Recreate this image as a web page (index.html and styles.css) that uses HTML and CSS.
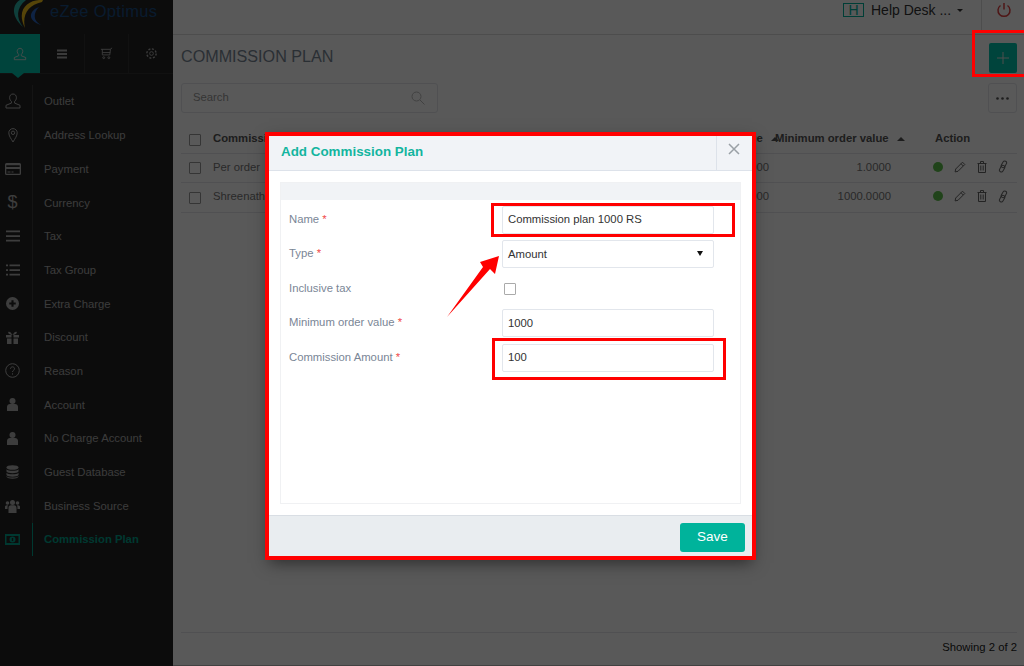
FILE: index.html
```html
<!DOCTYPE html>
<html lang="en">
<head>
    <meta charset="UTF-8">
    <title>Commission Plan</title>
    <link rel="stylesheet" href="styles.css">
</head>
<body>
    <div class="app">
        <aside class="sidebar">
            <div class="logo">
                <svg class="logo-mark" width="44" height="30" viewBox="0 0 44 30">
                    <path d="M12 0C5 4 2 15 15 27C8 18 8 8 18 0Z" fill="#2bb5a8"/>
                    <path d="M35 0C22-1 7 8 17 28C14 15 20 5 34 2Z" fill="#f2c21a"/>
                    <path d="M31 7C22 10 18 20 33 25C25 21 25 13 31 7Z" fill="#2a66c4"/>
                </svg>
                <span class="logo-text">eZee Optimus</span>
            </div>
            <div class="tabs">
                <div class="tab tab-active">
                    <svg width="14" height="14" viewBox="0 0 16 16" fill="none" stroke="currentColor"><path d="M8 1.500c-2 0-3.200 1.500-3.200 3.500 0 1.500.8 2.800 1.700 3.500v1.500L1.500 12v2.500h13V12l-5-1.900V8.500c.9-.7 1.700-2 1.700-3.500 0-2-1.200-3.500-3.200-3.500z"/></svg>
                </div>
                <div class="tab">
                    <svg width="12" height="12" viewBox="0 0 12 12" fill="currentColor"><path d="M1 1.500h10v2H1zM1 5h10v2H1zM1 8.500h10v2H1z"/></svg>
                </div>
                <div class="tab">
                    <svg width="13" height="13" viewBox="0 0 14 14" fill="none" stroke="currentColor"><path d="M1 2.500h10l2-1.500M2.500 2.500v6h8l.8-6M2.500 6h8.500"/><circle cx="4" cy="11.500" r="1"/><circle cx="9.500" cy="11.500" r="1"/></svg>
                </div>
                <div class="tab">
                    <svg width="13" height="13" viewBox="0 0 14 14" fill="none" stroke="currentColor"><circle cx="7" cy="7" r="2"/><circle cx="7" cy="7" r="5" stroke-width="1.500" stroke-dasharray="2.200 1.700"/></svg>
                </div>
            </div>
            <ul class="menu">
                <li class="menu-item"><span class="menu-icon"><svg width="16" height="16" viewBox="0 0 16 16" fill="none" stroke="currentColor"><path d="M8 1c-2.200 0-3.400 1.600-3.400 3.700 0 1.600.8 3 1.800 3.700v1.700L1 12.300V15h14v-2.700l-5.400-2.200V8.400c1-.7 1.800-2.100 1.800-3.700C11.400 2.600 10.200 1 8 1z"/></svg></span>Outlet</li>
                <li class="menu-item"><span class="menu-icon"><svg width="16" height="16" viewBox="0 0 16 16" fill="none" stroke="currentColor"><path d="M8 15C6 11.500 3.800 9 3.800 5.800a4.200 4.200 0 0 1 8.400 0C12.200 9 10 11.500 8 15z"/><circle cx="8" cy="5.800" r="1.700"/></svg></span>Address Lookup</li>
                <li class="menu-item"><span class="menu-icon"><svg width="16" height="14" viewBox="0 0 16 14" fill="currentColor"><path d="M1.500 1h13A1.500 1.500 0 0 1 16 2.500v9a1.500 1.500 0 0 1-1.500 1.500h-13A1.500 1.500 0 0 1 0 11.500v-9A1.500 1.500 0 0 1 1.500 1zM1.300 3.200v1.800h13.400V3.200zM1.300 7v4.700h13.400V7zM2.500 9.500h3v1h-3zM6.500 9.500h2v1h-2z" fill-rule="evenodd"/></svg></span>Payment</li>
                <li class="menu-item"><span class="menu-icon menu-glyph">$</span>Currency</li>
                <li class="menu-item"><span class="menu-icon"><svg width="14" height="12" viewBox="0 0 14 12" fill="currentColor"><path d="M0 .5h14v1.700H0zM0 5.200h14v1.700H0zM0 9.800h14v1.700H0z"/></svg></span>Tax</li>
                <li class="menu-item"><span class="menu-icon"><svg width="14" height="12" viewBox="0 0 14 12" fill="currentColor"><path d="M0 .5h2v1.700H0zM3.500 .5H14v1.700H3.500zM0 5.200h2v1.700H0zM3.500 5.200H14v1.700H3.500zM0 9.800h2v1.700H0zM3.500 9.800H14v1.700H3.500z"/></svg></span>Tax Group</li>
                <li class="menu-item"><span class="menu-icon"><svg width="13" height="13" viewBox="0 0 12 12"><path d="M6 0a6 6 0 1 0 0 12A6 6 0 0 0 6 0zM5 3h2v2h2v2H7v2H5V7H3V5h2z" fill="currentColor" fill-rule="evenodd"/></svg></span>Extra Charge</li>
                <li class="menu-item"><span class="menu-icon"><svg width="13" height="13" viewBox="0 0 13 13" fill="currentColor"><path d="M0 4h5.500v2.500H0zM7.500 4H13v2.500H7.500zM1 7.500h4.500V13H1zM7.500 7.500H12V13H7.500zM6.500 4C5 1 3 0 2.300 1S3 3.700 6.500 4c3.500-.3 4.900-2 4.200-3S8 1 6.500 4z"/></svg></span>Discount</li>
                <li class="menu-item"><span class="menu-icon"><svg width="15" height="15" viewBox="0 0 15 15" fill="none" stroke="currentColor"><circle cx="7.500" cy="7.500" r="6.800"/><path d="M5.500 5.800c0-2.600 4-2.600 4 0 0 1.600-2 1.500-2 3.200M7.500 10.300v1.300"/></svg></span>Reason</li>
                <li class="menu-item"><span class="menu-icon"><svg width="11" height="13" viewBox="0 0 11 13" fill="currentColor"><circle cx="5.500" cy="3" r="3"/><path d="M0 13V9c0-2 1.500-3 3-3h5c1.500 0 3 1 3 3v4z"/></svg></span>Account</li>
                <li class="menu-item"><span class="menu-icon"><svg width="11" height="13" viewBox="0 0 11 13" fill="currentColor"><circle cx="5.500" cy="3" r="3"/><path d="M0 13V9c0-2 1.500-3 3-3h5c1.500 0 3 1 3 3v4z"/></svg></span>No Charge Account</li>
                <li class="menu-item"><span class="menu-icon"><svg width="13" height="14" viewBox="0 0 13 14" fill="currentColor"><ellipse cx="6.500" cy="2.500" rx="6" ry="2.300"/><path d="M.5 4.200c1 2 11 2 12 0v2.300c-1 2.200-11 2.200-12 0zM.5 7.700c1 2 11 2 12 0V10c-1 2.200-11 2.200-12 0zM.5 11c1 2 11 2 12 0v.8c-1 2.600-11 2.600-12 0z"/></svg></span>Guest Database</li>
                <li class="menu-item"><span class="menu-icon"><svg width="15" height="14" viewBox="0 0 15 14" fill="currentColor"><circle cx="7.500" cy="3.500" r="2.500"/><circle cx="2.500" cy="4" r="1.800"/><circle cx="12.500" cy="4" r="1.800"/><path d="M3.500 14V9c0-2 1-2.800 2.500-2.800h3c1.500 0 2.500.8 2.500 2.800v5zM0 10V8c0-1 .7-1.800 2-1.800h1C2.500 7 2.500 8 2.500 10zM15 10V8c0-1-.7-1.800-2-1.800h-1c.5.8.5 1.800.5 3.800z"/></svg></span>Business Source</li>
                <li class="menu-item menu-active"><span class="menu-icon"><svg width="15" height="11" viewBox="0 0 15 11"><path d="M0 0h15v11H0zM1.500 2v7h12V2zM7.500 2.500a3 3 0 1 1 0 6 3 3 0 0 1 0-6zM6.800 4v3h1.400V4z" fill="currentColor" fill-rule="evenodd"/></svg></span>Commission Plan</li>
            </ul>
        </aside>

        <div class="main">
            <header class="topbar">
                <span class="desk-badge">H</span>
                <span class="desk-name">Help Desk ...</span>
                <span class="caret-down"></span>
                <span class="power">
                    <svg width="16" height="16" viewBox="0 0 16 16" fill="none" stroke="currentColor" stroke-width="1.500"><path d="M8 1v6.500M4.500 3.500a6 6 0 1 0 7 0"/></svg>
                </span>
            </header>

            <section class="content">
                <div class="title-row">
                    <h1>COMMISSION PLAN</h1>
                    <button class="add-btn">
                        <svg width="14" height="14" viewBox="0 0 14 14" stroke="currentColor"><path d="M7 1v12M1 7h12"/></svg>
                    </button>
                </div>
                <div class="search-row">
                    <div class="search">
                        <span class="search-text">Search</span>
                        <svg width="14" height="14" viewBox="0 0 14 14" fill="none" stroke="currentColor"><circle cx="5.500" cy="5.500" r="4.500"/><path d="M9 9l4.500 4.500"/></svg>
                    </div>
                    <button class="more-btn">
                        <svg width="13" height="3" viewBox="0 0 13 3" fill="currentColor"><circle cx="1.500" cy="1.500" r="1.300"/><circle cx="6.500" cy="1.500" r="1.300"/><circle cx="11.500" cy="1.500" r="1.300"/></svg>
                    </button>
                </div>
                <table class="grid">
                    <thead>
                        <tr>
                            <th class="col-check"><span class="check"></span></th>
                            <th class="col-name">Commission Plan</th>
                            <th class="col-value">Value <span class="caret-up"></span></th>
                            <th class="col-min">Minimum order value <span class="caret-up"></span></th>
                            <th class="col-action">Action</th>
                        </tr>
                    </thead>
                    <tbody>
                        <tr>
                            <td><span class="check"></span></td>
                            <td>Per order</td>
                            <td class="num-value">1.0000</td>
                            <td class="num-min">1.0000</td>
                            <td>
                                <div class="actions">
                                    <span class="dot"></span>
                                    <svg width="12" height="12" viewBox="0 0 12 12" fill="none" stroke="currentColor"><path d="M8.500 1.200l2.300 2.300-6.800 6.800-2.900.6.600-2.900zM7 2.700l2.300 2.300"/></svg>
                                    <svg width="10" height="12" viewBox="0 0 10 12" fill="none" stroke="currentColor"><path d="M1.500 2.500h7V11.500h-7zM.5 2.500h9M3.500 2.500V.5h3v2M3.800 4.500v5M6.200 4.500v5"/></svg>
                                    <svg width="10" height="13" viewBox="0 0 10 13" fill="none" stroke="currentColor"><rect x="4" y=".8" width="3.800" height="7" rx="1.900" transform="rotate(30 5.900 4.300)"/><rect x="2.200" y="5.200" width="3.800" height="7" rx="1.900" transform="rotate(30 4.100 8.700)"/></svg>
                                </div>
                            </td>
                        </tr>
                        <tr>
                            <td><span class="check"></span></td>
                            <td>Shreenath</td>
                            <td class="num-value">100.0000</td>
                            <td class="num-min">1000.0000</td>
                            <td>
                                <div class="actions">
                                    <span class="dot"></span>
                                    <svg width="12" height="12" viewBox="0 0 12 12" fill="none" stroke="currentColor"><path d="M8.500 1.200l2.300 2.300-6.800 6.800-2.900.6.600-2.900zM7 2.700l2.300 2.300"/></svg>
                                    <svg width="10" height="12" viewBox="0 0 10 12" fill="none" stroke="currentColor"><path d="M1.500 2.500h7V11.500h-7zM.5 2.500h9M3.500 2.500V.5h3v2M3.800 4.500v5M6.200 4.500v5"/></svg>
                                    <svg width="10" height="13" viewBox="0 0 10 13" fill="none" stroke="currentColor"><rect x="4" y=".8" width="3.800" height="7" rx="1.900" transform="rotate(30 5.900 4.300)"/><rect x="2.200" y="5.200" width="3.800" height="7" rx="1.900" transform="rotate(30 4.100 8.700)"/></svg>
                                </div>
                            </td>
                        </tr>
                    </tbody>
                </table>
                <footer class="list-footer">Showing 2 of 2</footer>
            </section>
        </div>
    </div>

    <div class="overlay"></div>

    <div class="modal">
        <div class="modal-head">
            <h2>Add Commission Plan</h2>
            <span class="modal-close">
                <svg width="12" height="12" viewBox="0 0 12 12" stroke="currentColor" stroke-width="1.500"><path d="M1 1l10 10M11 1L1 11"/></svg>
            </span>
        </div>
        <div class="modal-body">
            <div class="panel">
                <div class="panel-strip"></div>
                <form class="form">
                    <label>Name <em>*</em></label>
                    <input class="field" type="text" value="Commission plan 1000 RS">
                    <label>Type <em>*</em></label>
                    <div class="select"><span>Amount</span><span class="select-caret"></span></div>
                    <label>Inclusive tax</label>
                    <div class="check-wrap"><span class="check check-light"></span></div>
                    <label>Minimum order value <em>*</em></label>
                    <input class="field" type="text" value="1000">
                    <label>Commission Amount <em>*</em></label>
                    <input class="field" type="text" value="100">
                </form>
            </div>
        </div>
        <div class="modal-foot">
            <button class="save-btn">Save</button>
        </div>
    </div>

    <!-- annotations drawn on top of the screenshot -->
    <div class="mark mark-modal"></div>
    <div class="mark mark-add"></div>
    <div class="mark mark-name"></div>
    <div class="mark mark-amount"></div>
    <svg class="arrow" width="54" height="66" viewBox="0 0 54 66"><path d="M0 65L36 15 33 10 52 4 48 22 43 17z" fill="#ff0000"/></svg>
</body>
</html>
```

FILE: styles.css
```css
* {
    box-sizing: border-box;
}
html, body {
    height: 100%;
}
body {
    margin: 0;
    overflow: hidden;
    font-family: "Liberation Sans", Arial, sans-serif;
    font-size: 11.300px;
    color: #555;
    background-color: #fff;
}
.app {
    display: flex;
    height: 666px;
}

/* sidebar */
.sidebar {
    width: 173px;
    flex-shrink: 0;
    background-color: #242424;
}
.logo {
    height: 34px;
    display: flex;
    align-items: flex-start;
    overflow: hidden;
    padding-left: 8px;
}
.logo-text {
    margin-left: -2px;
    font-size: 16.500px;
    line-height: 22px;
    letter-spacing: .3px;
    color: #1a4d85;
}
.tabs {
    display: flex;
    height: 40px;
    border-bottom: 1px solid #333;
}
.tab {
    flex: 1;
    display: flex;
    align-items: center;
    justify-content: center;
    color: #aaa;
    border-right: 1px solid #333;
}
.tab:last-child {
    border-right: 0;
}
.tab-active {
    position: relative;
    flex: 0 0 40px;
    background-color: #00c4ab;
    color: #ddd;
    border-right: 0;
}
.tab-active::after {
    content: "";
    position: absolute;
    left: 12px;
    bottom: -5px;
    border-left: 6px solid transparent;
    border-right: 6px solid transparent;
    border-top: 5px solid #00c4ab;
}
.menu {
    list-style: none;
    margin: 10.600px 0 0;
    padding: 0;
}
.menu-item {
    display: flex;
    align-items: center;
    height: 33.700px;
    color: #aaa;
}
.menu-icon {
    width: 33px;
    height: 100%;
    margin-right: 11px;
    padding-right: 7px;
    display: flex;
    align-items: center;
    justify-content: center;
    border-right: 1px solid #3a3a3a;
    color: #b0b0b0;
}
.menu-glyph {
    font-size: 18px;
}
.menu-active {
    color: #00a08b;
    font-weight: bold;
}
.menu-active .menu-icon {
    color: #00a08b;
    border-right: 1px solid #00a08b;
}

/* top bar */
.main {
    flex: 1;
    min-width: 0;
    display: flex;
    flex-direction: column;
    border-bottom: 1px solid #bbb;
}
.topbar {
    height: 35px;
    flex-shrink: 0;
    display: flex;
    align-items: flex-start;
    padding-top: 3px;
    padding-left: 670px;
    background-color: #fff;
    border-bottom: 1px solid #ddd;
}
.desk-badge {
    width: 21px;
    height: 14px;
    margin-right: 7px;
    border: 1px solid #00b39b;
    color: #00b39b;
    font-size: 14px;
    line-height: 12px;
    text-align: center;
}
.desk-name {
    font-size: 14px;
    line-height: 14px;
    color: #333;
}
.caret-down {
    margin: 6px 0 0 6px;
    border-left: 3px solid transparent;
    border-right: 3px solid transparent;
    border-top: 3px solid #333;
}
.power {
    height: 31px;
    margin: -3px 0 0 18px;
    padding: 2px 0 0 14px;
    border-left: 1px solid #ddd;
    color: #e04040;
}

/* list page */
.content {
    flex: 1;
    display: flex;
    flex-direction: column;
    padding: 8px 7px 0 8px;
}
.title-row {
    display: flex;
    align-items: center;
    justify-content: space-between;
    height: 30px;
}
h1 {
    margin: 0 0 4px;
    font-size: 16.150px;
    font-weight: normal;
    color: #7a8795;
}
.add-btn {
    width: 28px;
    height: 30px;
    padding: 0;
    display: flex;
    align-items: center;
    justify-content: center;
    background-color: #00c4ab;
    color: #ddd;
    border: none;
    border-radius: 2px;
}
.search-row {
    display: flex;
    justify-content: space-between;
    margin-top: 10px;
}
.search {
    width: 257px;
    height: 30px;
    padding: 0 12px 0 11px;
    display: flex;
    align-items: center;
    justify-content: space-between;
    border: 1px solid #e4e6ea;
    border-radius: 3px;
    color: #999;
}
.search-text {
    margin-bottom: 2px;
}
.search svg {
    color: #bbb;
}
.more-btn {
    width: 29px;
    height: 30px;
    padding: 0;
    display: flex;
    align-items: center;
    justify-content: center;
    color: #555;
    background-color: #fff;
    border: 1px solid #e4e6ea;
    border-radius: 3px;
}
.grid {
    width: 100%;
    margin-top: 10px;
    border-collapse: collapse;
    table-layout: fixed;
}
.grid th, .grid td {
    padding: 0;
}
.grid td:not(:first-child) {
    padding-bottom: 2px;
}
.grid th {
    height: 30px;
    text-align: left;
    font-weight: bold;
    color: #555;
    white-space: nowrap;
}
.grid td {
    height: 29.500px;
    color: #777;
    border-top: 1px solid #e4e6ea;
}
.grid tr:last-child td {
    border-bottom: 1px solid #e4e6ea;
}
.col-check {
    width: 32px;
}
.col-check .check {
    margin-top: 4px;
}
.col-value {
    width: 172px;
    text-align: right !important;
}
.col-value .caret-up {
    margin-right: -6px;
}
.col-min {
    width: 132px;
    padding-left: 2px !important;
}
.col-action {
    width: 112px;
    padding-left: 30px !important;
}
.num-value {
    text-align: right;
    padding-right: 4px !important;
}
.num-min {
    text-align: right;
    padding-right: 14px !important;
}
.check {
    display: inline-block;
    width: 12px;
    height: 12px;
    margin-left: 8px;
    vertical-align: middle;
    border: 1.500px solid #999;
    border-radius: 1px;
}
.caret-up {
    display: inline-block;
    margin-left: 5px;
    vertical-align: middle;
    border-left: 4px solid transparent;
    border-right: 4px solid transparent;
    border-bottom: 4px solid #555;
}
.actions {
    display: flex;
    align-items: center;
    gap: 11px;
    padding-left: 28px;
    color: #666;
}
.dot {
    width: 10px;
    height: 10px;
    border-radius: 50%;
    background-color: #5cc04a;
}
.list-footer {
    margin-top: auto;
    height: 33px;
    line-height: 28px;
    text-align: right;
    color: #222;
    border-top: 1px solid #e4e6ea;
}

/* dialog */
.overlay {
    position: absolute;
    inset: 0;
    background-color: rgba(0, 0, 0, .65);
}
.modal {
    position: absolute;
    left: 269px;
    top: 135px;
    width: 483px;
    height: 423px;
    display: flex;
    flex-direction: column;
    background-color: #fff;
    box-shadow: 0 5px 15px rgba(0, 0, 0, .5);
}
.modal-head {
    height: 36px;
    flex-shrink: 0;
    display: flex;
    align-items: stretch;
    justify-content: space-between;
    background-color: #f1f3f7;
    border-bottom: 1px solid #dde2ea;
}
h2 {
    margin: 0;
    padding-left: 12px;
    font-size: 13.400px;
    line-height: 33px;
    color: #13b59f;
}
.modal-close {
    width: 36px;
    padding: 8px 0 0 11px;
    border-left: 1px solid #dde2ea;
    color: #9aa0a6;
}
.modal-body {
    flex: 1;
    padding: 11px;
}
.panel {
    height: 100%;
    border: 1px solid #f0f1f3;
}
.panel-strip {
    height: 17px;
    background-color: #f1f3f6;
}
.form {
    display: grid;
    grid-template-columns: 213px 212px;
    grid-auto-rows: 34.500px;
    align-items: center;
    padding: 2.700px 0 0 8px;
}
.form label {
    color: #7a8696;
    line-height: 28px;
    margin-top: -2px;
}
.form em {
    font-style: normal;
    color: #f04a4a;
}
.field, .select {
    width: 212px;
    height: 28px;
    padding: 0 5px 1px;
    font-family: inherit;
    font-size: 11.300px;
    color: #333;
    background-color: #fff;
    border: 1px solid #e2e6ec;
    border-radius: 2px;
}
.select {
    display: flex;
    align-items: center;
    justify-content: space-between;
    padding-right: 10px;
}
.select-caret {
    border-left: 3.500px solid transparent;
    border-right: 3.500px solid transparent;
    border-top: 5px solid #111;
}
.check-wrap {
    display: flex;
    align-items: center;
}
.check-light {
    margin-left: 2px;
    border-color: #aaa;
}
.modal-foot {
    height: 43px;
    flex-shrink: 0;
    display: flex;
    justify-content: flex-end;
    align-items: flex-start;
    padding: 7px 7px 0 0;
    background-color: #e9edf0;
    border-top: 1px solid #d9dee4;
}
.save-btn {
    width: 65px;
    height: 29px;
    padding: 0 0 3px;
    font-family: inherit;
    font-size: 13.500px;
    color: #fff;
    background-color: #00b39b;
    border: none;
    border-radius: 3px;
}

/* red annotations */
.mark {
    position: absolute;
    border: 3px solid #ff0000;
}
.mark-modal {
    left: 265px;
    top: 132px;
    width: 491px;
    height: 428px;
    border-width: 4px;
}
.mark-add {
    left: 972px;
    top: 30px;
    width: 60px;
    height: 47px;
}
.mark-name {
    left: 491px;
    top: 203px;
    width: 244px;
    height: 34px;
}
.mark-amount {
    left: 492px;
    top: 338px;
    width: 234px;
    height: 42px;
}
.arrow {
    position: absolute;
    left: 447px;
    top: 252px;
}
```
